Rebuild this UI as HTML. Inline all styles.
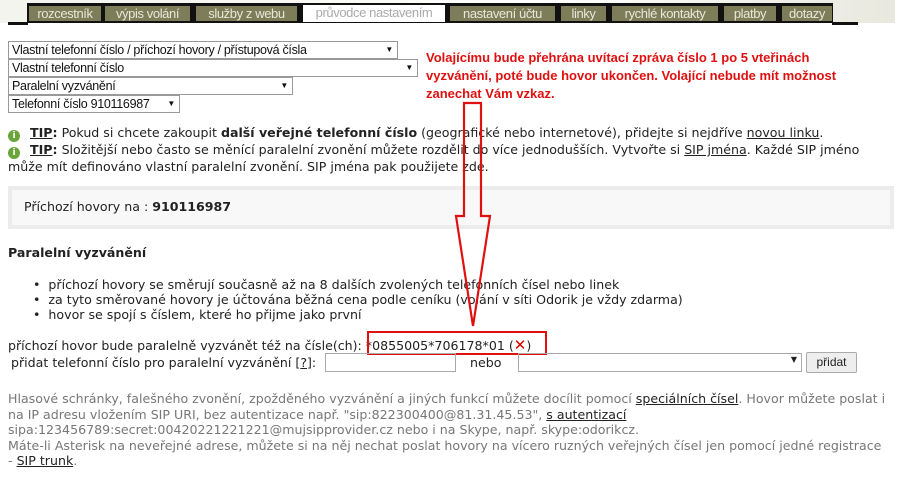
<!DOCTYPE html>
<html><head><meta charset="utf-8">
<style>
*{margin:0;padding:0;box-sizing:border-box}
body{width:900px;height:479px;background:#fff;position:relative;overflow:hidden;font-family:"DejaVu Sans","Liberation Sans",sans-serif;font-size:12.6px;color:#222}
.a{position:absolute;white-space:nowrap}
.hdr{position:absolute;left:0;top:0;width:895px;height:23px;background:linear-gradient(90deg,#f4f4ee 0%,#fafaf6 40%,#ffffff 60%,#e8e8de 100%)}
.bar{position:absolute;left:27px;top:3px;width:806px;height:20px;background:#111}
.tab{position:absolute;top:6px;height:15px;background:#7d7d5a;color:#e8e8d8;font-family:"Liberation Sans",sans-serif;font-size:13px;line-height:15px;text-align:center;letter-spacing:-0.4px}
.tab.on{background:#fff;color:#aaa;top:5px;height:17px}
.sel{position:absolute;left:8px;height:18px;border:1px solid #999;background:#fff;font-family:"Liberation Sans",sans-serif;font-size:12.5px;line-height:16px;padding-left:3px;letter-spacing:-0.3px;color:#111}
.sel:after{content:"▼";position:absolute;right:4px;top:0;font-size:8px}
.red{color:#e01010;font-family:"Liberation Sans",sans-serif;font-weight:bold;font-size:13px;line-height:18px}
u{text-decoration:underline}
.i{display:inline-block;width:12px;height:12px;border-radius:50%;background:#6aa43a;color:#fff;font-size:9px;line-height:12px;text-align:center;font-weight:bold;vertical-align:-1px;margin-right:10px}
.gray{color:#777}
</style></head><body>
<div class="hdr"></div>
<div class="a" style="left:8px;top:22px;width:20px;height:3px;background:#111"></div>
<div class="a" style="left:832px;top:22px;width:26px;height:3px;background:#111"></div>
<div class="bar"></div>
<div class="tab" style="left:29px;width:72px">rozcestník</div>
<div class="tab" style="left:105px;width:85px">výpis volání</div>
<div class="tab" style="left:196px;width:101px">služby z webu</div>
<div class="tab on" style="left:303px;width:142px">průvodce nastavením</div>
<div class="tab" style="left:450px;width:105px">nastavení účtu</div>
<div class="tab" style="left:561px;width:45px">linky</div>
<div class="tab" style="left:612px;width:106px">rychlé kontakty</div>
<div class="tab" style="left:724px;width:52px">platby</div>
<div class="tab" style="left:782px;width:50px">dotazy</div>

<div class="sel" style="top:41px;width:390px">Vlastní telefonní číslo / příchozí hovory / přístupová čísla</div>
<div class="sel" style="top:59px;width:410px">Vlastní telefonní číslo</div>
<div class="sel" style="top:77px;width:285px">Paralelní vyzvánění</div>
<div class="sel" style="top:95px;width:172px">Telefonní číslo 910116987</div>

<div class="a red" style="left:426px;top:49px">Volajícímu bude přehrána uvítací zpráva číslo 1 po 5 vteřinách<br>vyzvánění, poté bude hovor ukončen. Volající nebude mít možnost<br>zanechat Vám vzkaz.</div>

<div class="a" style="left:8px;top:125px;line-height:16px;white-space:normal;width:888px"><span class="i">i</span><b><u>TIP</u>:</b> Pokud si chcete zakoupit <b>další veřejné telefonní číslo</b> (geografické nebo internetové), přidejte si nejdříve <u>novou linku</u>.<br><span class="i">i</span><b><u>TIP</u>:</b> Složitější nebo často se měnící paralelní zvonění můžete rozdělit do více jednodušších. Vytvořte si <u>SIP jména</u>. Každé SIP jméno může mít definováno vlastní paralelní zvonění. SIP jména pak použijete zde.</div>

<div class="a" style="left:8px;top:186px;width:886px;height:43px;background:#f8f8f8;border:4px solid #ececec"></div>
<div class="a" style="left:24px;top:199px">Příchozí hovory na : <b>910116987</b></div>

<div class="a" style="left:8px;top:245px;font-weight:bold">Paralelní vyzvánění</div>
<div class="a" style="left:33px;top:277px;line-height:15px">•&nbsp;&nbsp;příchozí hovory se směrují současně až na 8 dalších zvolených telefonních čísel nebo linek<br>•&nbsp;&nbsp;za tyto směrované hovory je účtována běžná cena podle ceníku (volání v síti Odorik je vždy zdarma)<br>•&nbsp;&nbsp;hovor se spojí s číslem, které ho přijme jako první</div>

<div class="a" style="left:8px;top:336px">příchozí hovor bude paralelně vyzvánět též na čísle(ch): *0855005*706178*01 (<span style="color:#d00;font-size:15px">✕</span>)</div>
<div class="a" style="left:367px;top:331px;width:180px;height:24px;border:2px solid #e01010"></div>

<div class="a" style="left:11px;top:355px">přidat telefonní číslo pro paralelní vyzvánění [<u>?</u>]:</div>
<div class="a" style="left:325px;top:353px;width:131px;height:19px;border:1px solid #aaa"></div>
<div class="a" style="left:470px;top:355px">nebo</div>
<div class="a" style="left:518px;top:353px;width:284px;height:19px;border:1px solid #aaa"><span style="position:absolute;right:4px;top:1px;font-size:8px">▼</span></div>
<div class="a" style="left:806px;top:352px;width:51px;height:21px;border:1px solid #aaa;background:#eee;border-radius:2px;font-family:'Liberation Sans',sans-serif;font-size:12px;text-align:center;line-height:19px">přidat</div>

<div class="a gray" style="left:8px;top:391px;width:880px;white-space:normal;line-height:15.5px">Hlasové schránky, falešného zvonění, zpožděného vyzvánění a jiných funkcí můžete docílit pomocí <u style="color:#222">speciálních čísel</u>. Hovor můžete poslat i na IP adresu vložením SIP URI, bez autentizace např. "sip:822300400@81.31.45.53", <u style="color:#222">s autentizací</u><br>sipa:123456789:secret:00420221221221@mujsipprovider.cz nebo i na Skype, např. skype:odorikcz.<br>Máte-li Asterisk na neveřejné adrese, můžete si na něj nechat poslat hovory na vícero ruzných veřejných čísel jen pomocí jedné registrace - <u style="color:#222">SIP trunk</u>.</div>

<svg class="a" style="left:0;top:0" width="900" height="479">
<polygon points="464,103 481,103 481,216 490,216 473,326 456,216 464,216" fill="none" stroke="#e01010" stroke-width="2.2"/>
</svg>
</body></html>
